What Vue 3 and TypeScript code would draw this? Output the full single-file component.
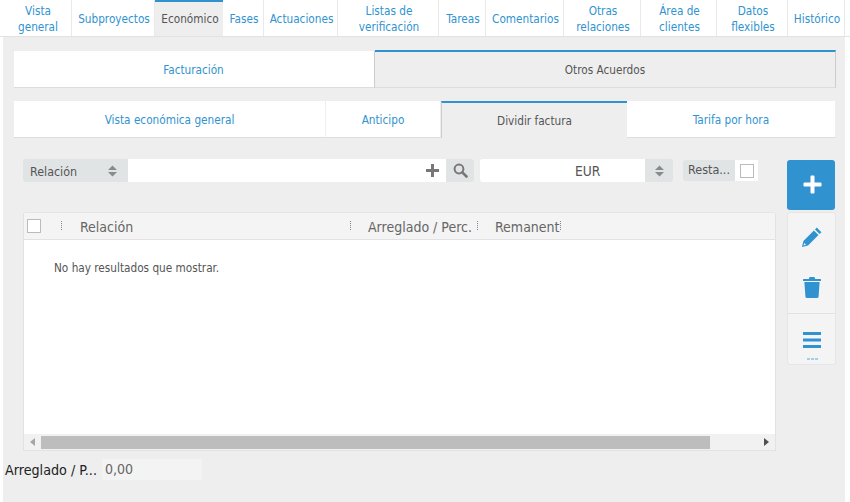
<script setup lang="ts">
interface Tab { label: string; width: number; active?: boolean }

const topTabs: Tab[] = [
  { label: 'Vista general', width: 69 },
  { label: 'Subproyectos', width: 83 },
  { label: 'Económico', width: 68, active: true },
  { label: 'Fases', width: 41 },
  { label: 'Actuaciones', width: 74 },
  { label: 'Listas de verificación', width: 101 },
  { label: 'Tareas', width: 47 },
  { label: 'Comentarios', width: 78 },
  { label: 'Otras relaciones', width: 77 },
  { label: 'Área de clientes', width: 76 },
  { label: 'Datos flexibles', width: 71 },
  { label: 'Histórico', width: 57 },
]

const subTabs: Tab[] = [
  { label: 'Vista económica general', width: 312 },
  { label: 'Anticipo', width: 115 },
  { label: 'Dividir factura', width: 186, active: true },
  { label: 'Tarifa por hora', width: 209 },
]
</script>

<template>
  <div class="page">
    <nav class="top-tabs">
      <div
        v-for="t in topTabs"
        :key="t.label"
        class="top-tab"
        :class="{ active: t.active }"
        :style="{ width: t.width + 'px' }"
      >
        <span>{{ t.label }}</span>
      </div>
    </nav>

    <div class="billing-tabs">
      <div class="bill-tab first">Facturación</div>
      <div class="bill-tab active">Otros Acuerdos</div>
    </div>

    <div class="sub-tabs">
      <div
        v-for="t in subTabs"
        :key="t.label"
        class="sub-tab"
        :class="{ active: t.active }"
        :style="{ width: t.width + 'px' }"
      >
        {{ t.label }}
      </div>
    </div>

    <div class="workspace">
      <div class="main">
        <div class="filters">
          <div class="relation">
            <div class="select-label">
              <span>Relación</span>
              <svg class="updown" width="9" height="12" viewBox="0 0 9 12"><path d="M4.5 0.5 9 5H0zM0 7h9l-4.5 4.5z" /></svg>
            </div>
            <div class="relation-input">
              <svg width="13" height="13" viewBox="0 0 13 13"><path d="M5 0h3v5h5v3H8v5H5V8H0V5h5z" /></svg>
            </div>
            <div class="search-btn">
              <svg width="15" height="15" viewBox="0 0 15 15">
                <circle cx="6" cy="6" r="4.4" fill="none" stroke="#777" stroke-width="2" />
                <path d="M9.3 9.3 13.5 13.5" stroke="#777" stroke-width="2.6" stroke-linecap="round" />
              </svg>
            </div>
          </div>

          <div class="currency">
            <div class="currency-value"><span>EUR</span></div>
            <div class="currency-arrows">
              <svg class="updown" width="9" height="12" viewBox="0 0 9 12"><path d="M4.5 0.5 9 5H0zM0 7h9l-4.5 4.5z" /></svg>
            </div>
          </div>

          <div class="remnant">
            <div class="remnant-label">Resta...</div>
            <div class="remnant-box"><i class="check"></i></div>
          </div>
        </div>

        <div class="grid">
          <div class="grid-head">
            <div class="col col-check"><i class="check"></i></div>
            <i class="dots dots-first"></i>
            <div class="col col-rel">Relación</div>
            <i class="dots"></i>
            <div class="col col-fixed">Arreglado / Perc.</div>
            <i class="dots"></i>
            <div class="col col-rem">Remanent</div>
            <i class="dots"></i>
          </div>
          <div class="grid-body">No hay resultados que mostrar.</div>
          <div class="scrollbar">
            <svg class="arrow" width="5" height="8" viewBox="0 0 5 8"><path d="M5 0v8L0 4z" fill="#a5a5a5" /></svg>
            <div class="track"><div class="thumb"></div></div>
            <svg class="arrow" width="5" height="8" viewBox="0 0 5 8"><path d="M0 0v8l5-4z" fill="#505050" /></svg>
          </div>
        </div>

        <div class="footer-field">
          <span class="footer-label">Arreglado / P...</span>
          <span class="footer-value">0,00</span>
        </div>
      </div>

      <aside class="actions">
        <button class="add" type="button" aria-label="Añadir">
          <svg width="19" height="19" viewBox="0 0 19 19"><path d="M7.5 1.5a1 1 0 0 1 1-1h2a1 1 0 0 1 1 1v6h6a1 1 0 0 1 1 1v2a1 1 0 0 1-1 1h-6v6a1 1 0 0 1-1 1h-2a1 1 0 0 1-1-1v-6h-6a1 1 0 0 1-1-1v-2a1 1 0 0 1 1-1h6z" fill="#fff" /></svg>
        </button>
        <div class="tool-group">
          <button class="tool tool-edit" type="button" aria-label="Editar">
            <svg width="20" height="20" viewBox="0 0 20 20"><path d="M14.8 0.6 19.4 5.2 17.6 7 13 2.4zM11.9 3.5 16.5 8.1 6 18.6 0 20 1.4 14z" fill="#3093cf" /><path d="M2.3 15.9 1.5 18.5 4.1 17.7z" fill="#e8f2f8" /></svg>
          </button>
          <button class="tool tool-trash" type="button" aria-label="Eliminar">
            <svg width="18" height="21" viewBox="0 0 18 21"><path d="M6 1.2Q6 0 7.2 0h3.6Q12 0 12 1.2V2h5.4q.6 0 .6.6V4H0V2.6Q0 2 .6 2H6zM1.4 5h15.2l-1 14.4q-.1 1.6-1.7 1.6H4.1q-1.6 0-1.7-1.6z" fill="#3093cf" /></svg>
          </button>
          <button class="tool tool-menu" type="button" aria-label="Más">
            <svg width="18" height="16" viewBox="0 0 18 16"><path d="M0 0h18v3H0zM0 6.5h18v3H0zM0 13h18v3H0z" fill="#3093cf" /></svg>
            <span class="more"><i></i><i></i><i></i></span>
          </button>
        </div>
      </aside>
    </div>
  </div>
</template>

<style>
html, body { margin: 0; background: #fff; }
</style>

<style scoped>
.page {
  width: 850px;
  height: 502px;
  overflow: hidden;
  background: #fff;
  font-family: "DejaVu Sans", "Noto Sans", sans-serif;
  font-stretch: condensed;
  font-size: 11.7px;
  color: #555;
  display: flex;
  flex-direction: column;
}
.top-tabs {
  display: flex;
  height: 37px;
  box-sizing: border-box;
  padding-left: 3px;
  background: #fff;
  border-bottom: 1px solid #e2e2e2;
}
.top-tab {
  box-sizing: border-box;
  height: 36px;
  display: flex;
  align-items: center;
  justify-content: center;
  text-align: center;
  line-height: 16px;
  color: #3093cf;
  border-right: 1px solid #e9e9e9;
  padding: 1px 1px 0 3px;
}
.top-tab.active {
  background: #eee;
  color: #555;
  border-top: 2px solid #3093cf;
  border-right: none;
  padding: 0 1px 1px 3px;
}
.billing-tabs {
  margin-left: 3px;
  width: 842px;
  background: #eee;
  padding: 13px 9px 0 11px;
  display: flex;
  box-sizing: border-box;
  height: 51px;
  flex: none;
  position: relative;
}
.bill-tab {
  height: 38px;
  box-sizing: border-box;
  display: flex;
  align-items: center;
  justify-content: center;
  border-bottom: 1px solid #ddd;
}
.bill-tab.first {
  width: 361px;
  margin-top: 1px;
  height: 37px;
  background: #fff;
  color: #3093cf;
  border-right: 1px solid #ccc;
  padding: 2px 1px 0 0;
}
.bill-tab.active {
  flex: 1;
  background: #eee;
  color: #555;
  border-top: 2px solid #3093cf;
  border-right: 1px solid #ccc;
}
.sub-tabs {
  margin-left: 3px;
  width: 842px;
  flex: none;
  background: #eee;
  padding: 13px 0 0 11px;
  display: flex;
  box-sizing: border-box;
  height: 51px;
}
.sub-tab {
  height: 37px;
  box-sizing: border-box;
  background: #fff;
  color: #3093cf;
  display: flex;
  align-items: center;
  justify-content: center;
  border-bottom: 1px solid #ddd;
  border-right: 1px solid #eee;
  padding-top: 2px;
}
.sub-tab.active {
  background: #eee;
  color: #555;
  border-top: 2px solid #3093cf;
  border-left: 1px solid #ccc;
  border-bottom: none;
  border-right: none;
  padding-top: 1px;
}
.workspace {
  flex: 1;
  margin-left: 3px;
  width: 842px;
  background: #eee;
  padding: 20px 0 0 20px;
  box-sizing: border-box;
  display: flex;
}
.main { width: 753px; position: relative; }
.filters {
  display: flex;
  height: 23px;
  align-items: flex-start;
}
.relation {
  display: flex;
  width: 451px;
  height: 23px;
  border-radius: 3px;
  overflow: hidden;
}
.select-label {
  width: 105px;
  background: #e0e4e5;
  display: flex;
  align-items: center;
  justify-content: space-between;
  padding: 0 11px 0 7px;
  box-sizing: border-box;
  font-size: 12.4px;
}
.select-label span { padding-top: 2px; }
.updown path { fill: #868c8e; }
.relation-input {
  flex: 1;
  background: #fff;
  display: flex;
  align-items: center;
  justify-content: flex-end;
  padding-right: 7px;
}
.relation-input path { fill: #777; }
.search-btn {
  width: 28px;
  background: #e0e4e5;
  display: flex;
  align-items: center;
  justify-content: center;
}
.currency {
  margin-left: 6px;
  width: 193px;
  height: 23px;
  display: flex;
  border-radius: 3px;
  overflow: hidden;
}
.currency-value {
  flex: 1;
  background: #fff;
  font-size: 13.7px;
  display: flex;
  align-items: center;
  padding: 1px 0 0 95px;
}
.currency-arrows {
  width: 28px;
  background: #e0e4e5;
  display: flex;
  align-items: center;
  justify-content: center;
}
.remnant {
  margin: 1px 0 0 10px;
  display: flex;
  height: 21px;
}
.remnant-label {
  width: 52px;
  background: #e0e4e5;
  display: flex;
  align-items: center;
  justify-content: center;
  border-radius: 3px 0 0 3px;
  padding-bottom: 2px;
  box-sizing: border-box;
  font-size: 12.5px;
}
.remnant-box {
  width: 23px;
  background: #fff;
  display: flex;
  align-items: center;
  justify-content: center;
}
.check {
  display: block;
  width: 14px;
  height: 14px;
  box-sizing: border-box;
  background: #fff;
  border: 1px solid #bbb;
}
.grid {
  margin-top: 30px;
  width: 753px;
  height: 239px;
  box-sizing: border-box;
  background: #fff;
  border: 1px solid #e2e2e2;
  border-top: 1px solid #e6e6e6;
  border-radius: 3px 3px 0 0;
  display: flex;
  flex-direction: column;
}
.grid-head {
  height: 27px;
  flex: none;
  box-sizing: border-box;
  display: flex;
  align-items: center;
  background: #f4f4f4;
  border-bottom: 1px solid #e2e2e2;
  font-size: 14px;
  color: #666;
}
.col-check { width: 37px; padding-left: 3px; box-sizing: border-box; }
.dots {
  display: block;
  width: 1px;
  height: 10px;
  flex: none;
  background-image: linear-gradient(#888 50%, transparent 50%);
  background-size: 1px 2px;
}
.col { white-space: nowrap; box-sizing: border-box; padding-top: 1px; }
.col-check { padding-top: 0; }
.col-rel { width: 288px; padding-left: 18px; }
.col-fixed { width: 126px; padding-left: 17px; }
.col-rem { width: 82px; padding-left: 17px; }
.grid-body {
  flex: 1;
  padding: 20px 0 0 30px;
  line-height: 16px;
  box-sizing: border-box;
}
.scrollbar {
  height: 16px;
  flex: none;
  background: #f1f1f1;
  display: flex;
  align-items: center;
}
.arrow { flex: none; margin: 0 6px; }
.track { flex: 1; height: 13px; }
.thumb { width: 669px; height: 13px; background: #bdbdbd; }
.footer-field {
  display: flex;
  align-items: center;
  margin: 8px 0 0 -20px;
  height: 21px;
}
.footer-label { width: 99px; color: #222; font-size: 14.2px; white-space: nowrap; padding-left: 2px; box-sizing: border-box; }
.footer-value {
  width: 100px;
  height: 21px;
  box-sizing: border-box;
  padding-left: 3px;
  background: #f3f3f3;
  font-size: 14px;
  line-height: 21px;
  color: #666;
}
.actions {
  width: 49px;
  margin-left: 11px;
  padding-top: 1px;
  display: flex;
  flex-direction: column;
  gap: 2px;
}
button { border: 0; padding: 0; margin: 0; display: flex; align-items: center; justify-content: center; background: none; }
.add {
  width: 48px;
  height: 50px;
  background: #3093cf;
  border-radius: 3px;
  padding: 0 0 2px 3px;
}
.tool-group {
  width: 49px;
  height: 153px;
  box-sizing: border-box;
  background: #f4f4f4;
  border: 1px solid #e6e6e6;
  border-radius: 3px;
  display: flex;
  flex-direction: column;
}
.tool { width: 100%; padding-left: 1px; box-sizing: border-box; }
.tool-edit { height: 50px; padding-bottom: 2px; }
.tool-trash { height: 50px; padding-bottom: 2px; }
.tool-menu {
  flex: 1;
  flex-direction: column;
  justify-content: flex-start;
  border-top: 1px solid #e2e2e2;
  padding-top: 18px;
}
.more { display: flex; gap: 1px; margin-top: 10px; }
.more i { display: block; width: 3px; height: 2px; background: #a4cfe9; }
</style>
